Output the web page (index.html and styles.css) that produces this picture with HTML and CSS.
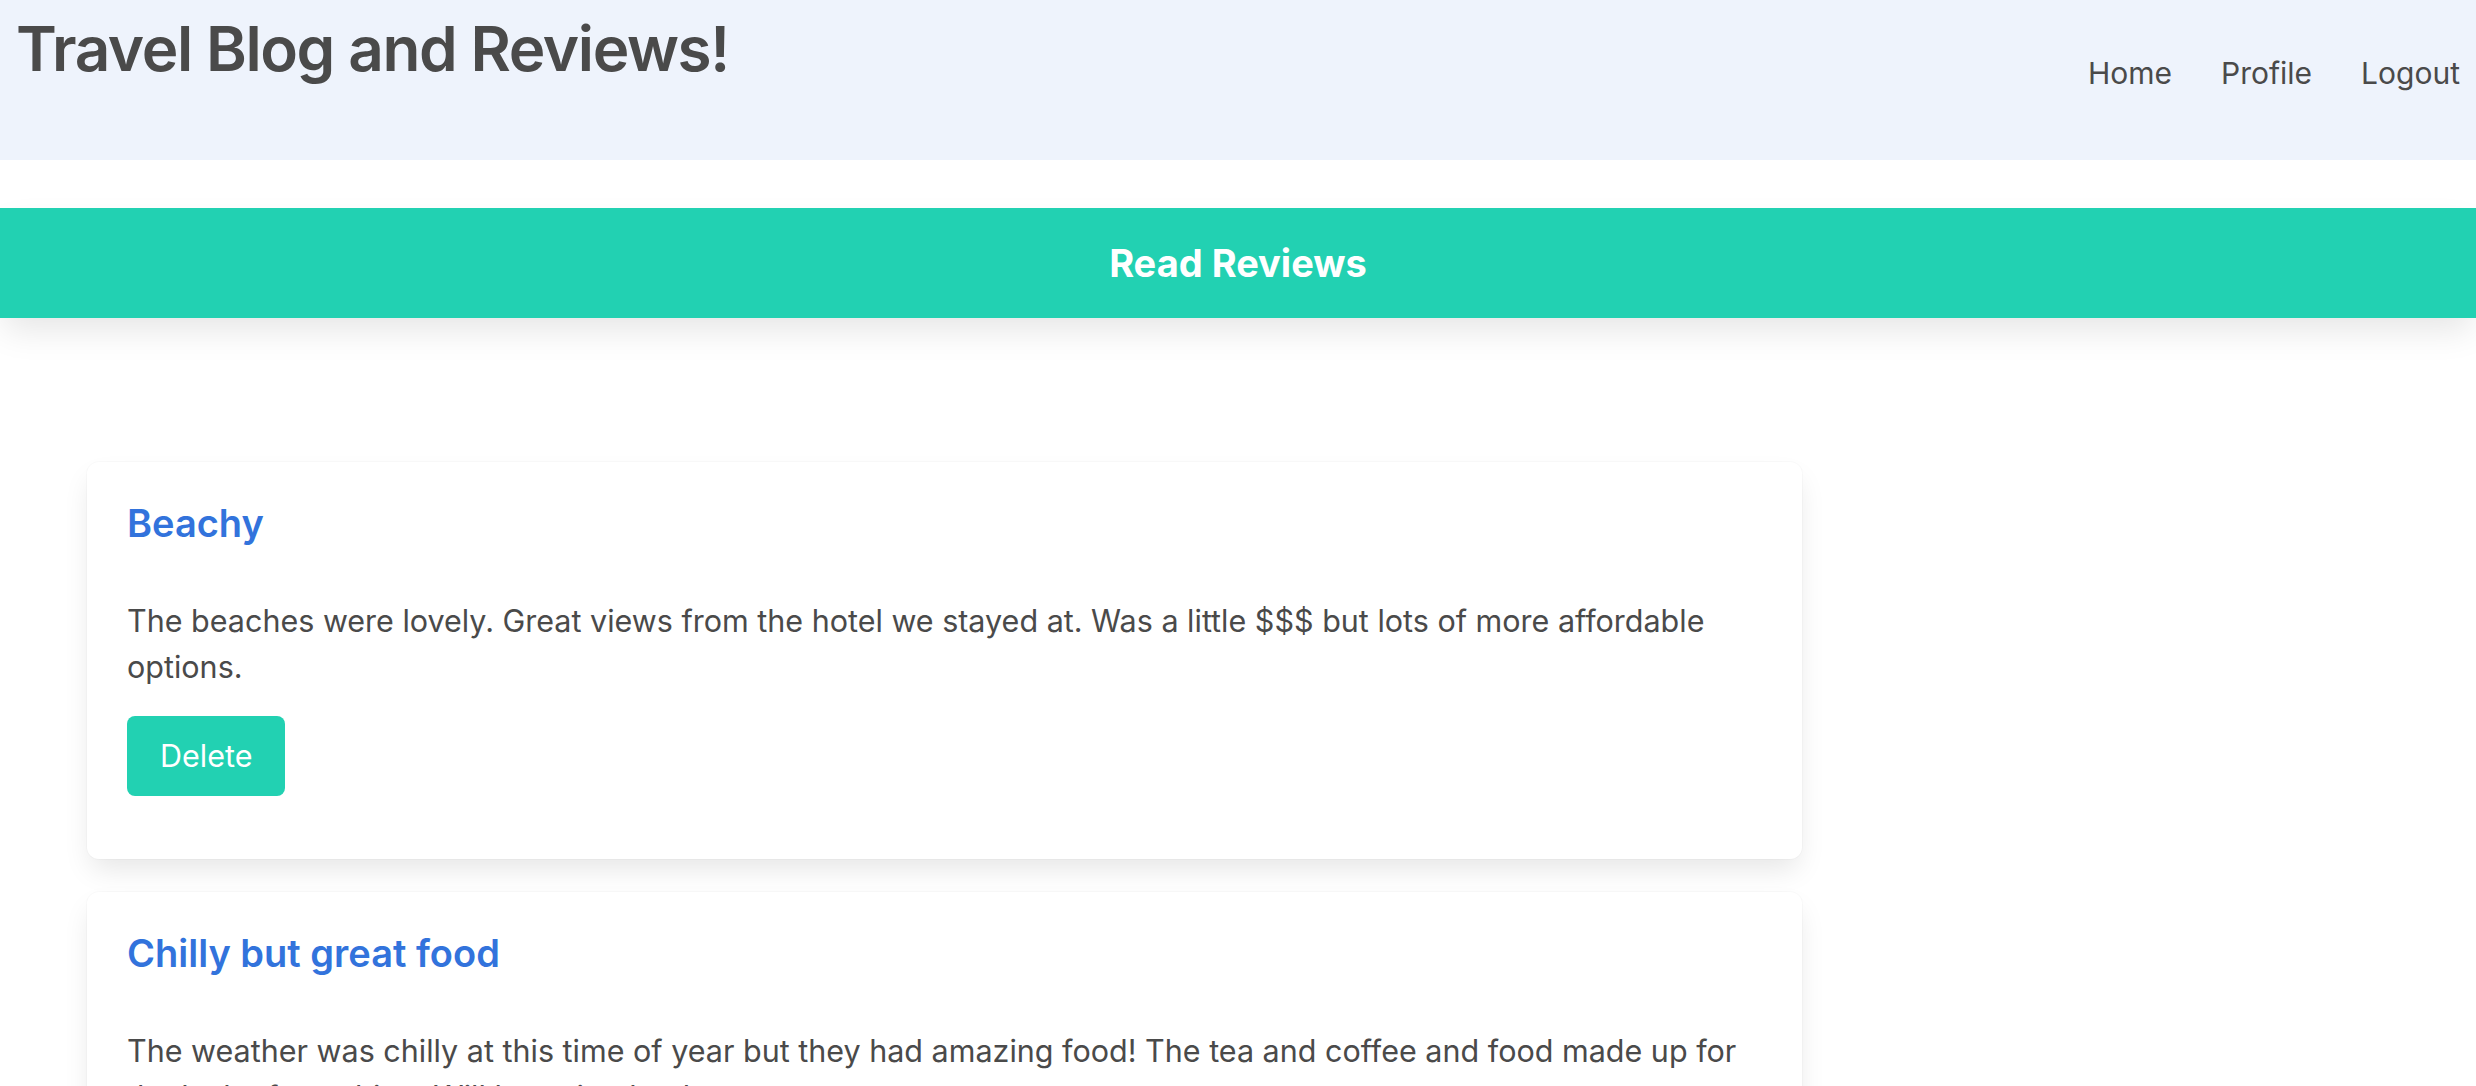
FILE: index.html
```html
<!DOCTYPE html>
<html lang="en">
<head>
<meta charset="utf-8">
<title>Travel Blog and Reviews!</title>
<link rel="stylesheet" href="styles.css">
</head>
<body>
<header class="site-header">
  <h1 class="site-title">Travel Blog and Reviews!</h1>
  <nav class="site-nav">
    <a href="#" class="nav-link">Home</a>
    <a href="#" class="nav-link">Profile</a>
    <a href="#" class="nav-link">Logout</a>
  </nav>
</header>
<section class="banner">
  <h2 class="banner-title">Read Reviews</h2>
</section>
<main class="reviews">
  <article class="card">
    <h3 class="card-title">Beachy</h3>
    <p class="card-text">The beaches were lovely. Great views from the hotel we stayed at. Was a little $$$ but lots of more affordable options.</p>
    <button class="btn">Delete</button>
  </article>
  <article class="card">
    <h3 class="card-title">Chilly but great food</h3>
    <p class="card-text">The weather was chilly at this time of year but they had amazing food! The tea and coffee and food made up for the lack of sunshine. Will be going back to try more.</p>
    <button class="btn">Delete</button>
  </article>
</main>
</body>
</html>
```
FILE: styles.css
```css
* { box-sizing: border-box; }
html, body { margin: 0; padding: 0; }
body {
  font-family: Inter, "Noto Sans", "Liberation Sans", sans-serif;
  color: #4a4a4a;
  background: #ffffff;
}
.site-header {
  height: 160px;
  background: #eef3fc;
  display: flex;
  justify-content: space-between;
  align-items: flex-start;
  padding: 14px 16px 0 16px;
}
.site-title {
  margin: 0;
  font-size: 62px;
  font-weight: 600;
  line-height: 1.125;
  letter-spacing: -1.4px;
  color: #4a4a4a;
}
.site-nav {
  display: flex;
  gap: 49px;
  padding-top: 37px;
}
.nav-link {
  font-size: 30px;
  line-height: 45px;
  color: #4a4a4a;
  text-decoration: none;
}
.banner {
  margin-top: 48px;
  height: 110px;
  background: #22d1b2;
  display: flex;
  align-items: center;
  justify-content: center;
  box-shadow: 0 16px 32px -4px rgba(10, 10, 10, 0.1);
}
.banner-title {
  margin: 0;
  font-size: 38px;
  font-weight: 700;
  color: #ffffff;
  line-height: 1;
}
.reviews {
  padding: 144px 0 40px 87px;
  width: 1802px;
  display: flex;
  flex-direction: column;
  gap: 33px;
}
.card {
  background: #ffffff;
  border-radius: 12px;
  box-shadow: 0 14px 28px -4px rgba(10, 10, 10, 0.1), 0 0 0 1px rgba(10, 10, 10, 0.02);
  padding: 40px 40px 63px 40px;
}
.card-title {
  margin: 0 0 53px 0;
  font-size: 38px;
  font-weight: 600;
  line-height: 1.125;
  color: #3273dc;
}
.card-text {
  margin: 0 0 26px 0;
  font-size: 30.5px;
  line-height: 46px;
}
.btn {
  display: block;
  height: 80px;
  padding: 0 33px;
  border: none;
  border-radius: 8px;
  background: #22d1b2;
  color: #ffffff;
  font-family: inherit;
  font-size: 30.5px;
}
```
